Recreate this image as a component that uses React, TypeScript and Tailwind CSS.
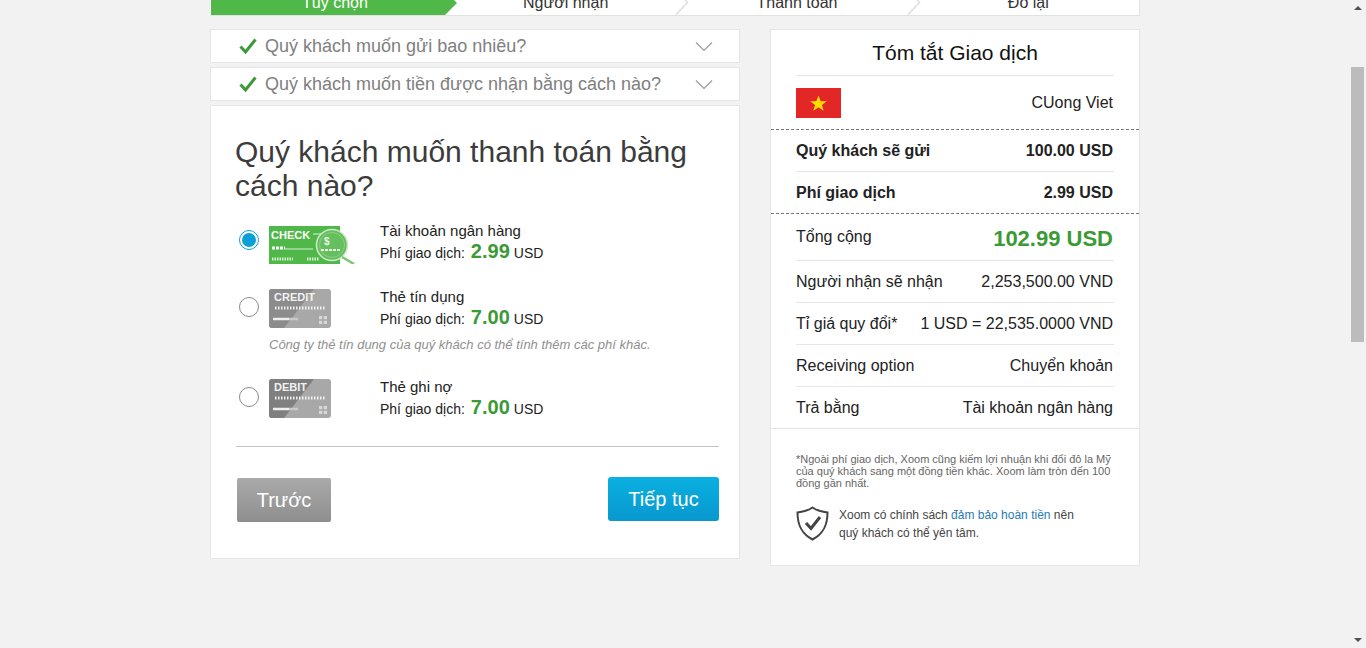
const steps = ["Người nhận", "Thanh toán", "Đô lại"];

const rows = [
  { label: "Người nhận sẽ nhận", value: "2,253,500.00 VND" },
  { label: "Tỉ giá quy đổi*", value: "1 USD = 22,535.0000 VND" },
  { label: "Receiving option", value: "Chuyển khoản" },
  { label: "Trả bằng", value: "Tài khoản ngân hàng" },
];

const Chevron = () => (
  <svg width="18" height="11" viewBox="0 0 18 11" fill="none" className="shrink-0">
    <path d="M1 1.5 9 9.5 17 1.5" stroke="#9a9a9a" strokeWidth="1.2" />
  </svg>
);

const Check = () => (
  <svg width="18" height="16" viewBox="0 0 18 16" fill="none" className="shrink-0">
    <path d="M1.5 8.5 6.5 14 16.5 1.5" stroke="#3c9a36" strokeWidth="3" />
  </svg>
);

const Accordion = ({ title }: { title: string }) => (
  <div className="flex h-[34px] items-center border border-[#e6e6e6] bg-white pl-[28px] pr-[26px]">
    <Check />
    <span className="ml-[8px] flex-1 text-[18px] text-[#808080]">{title}</span>
    <Chevron />
  </div>
);

const CheckCard = () => (
  <svg width="88" height="44" viewBox="0 0 88 44" className="shrink-0">
    <rect x="0" y="6" width="71" height="38" fill="#50b848" />
    <text x="2" y="19" fontFamily="Liberation Sans" fontWeight="700" fontSize="11" fill="#fff">CHECK</text>
    <path d="M44 14H60" stroke="#d8f0d4" strokeWidth="1" />
    <path d="M3 28H16" stroke="#ffffff" strokeWidth="3" strokeDasharray="3 1" />
    <path d="M16 29H44" stroke="#d8f0d4" strokeWidth="1" />
    <path d="M3 39H24M38 39H50" stroke="#d8f0d4" strokeWidth="3" strokeDasharray="1.5 1" />
    <circle cx="63" cy="25" r="15.5" fill="#66bf5e" stroke="#cfeaca" strokeWidth="1.5" />
    <circle cx="63" cy="25" r="12.5" fill="none" stroke="#8bd084" strokeWidth="1" />
    <path d="M73 37 85 44" stroke="#7cc776" strokeWidth="2.5" />
    <text x="55" y="25" fontFamily="Liberation Sans" fontWeight="700" fontSize="10" fill="#e6f6e4">$</text>
    <path d="M52 30H72" stroke="#e6f6e4" strokeWidth="2" strokeDasharray="3 1" />
  </svg>
);

const PlasticCard = ({ label, dark }: { label: string; dark: string }) => (
  <svg width="62" height="39" viewBox="0 0 62 39" className="shrink-0">
    <rect width="62" height="39" rx="3" fill="#a8a8a8" />
    <path d="M3 0H45L15 39H3a3 3 0 0 1-3-3V3a3 3 0 0 1 3-3z" fill={dark} />
    <text x="5" y="12" fontFamily="Liberation Sans" fontWeight="700" fontSize="11" fill="#f2f2f2">{label}</text>
    <path d="M6 19H56" stroke="#f0f0f0" strokeWidth="3" strokeDasharray="1.5 1.5" />
    <path d="M4 30H20" stroke="#eeeeee" strokeWidth="2.5" />
    <path d="M20 30H29" stroke="#c8c8c8" strokeWidth="2.5" />
    <rect x="50" y="27" width="8" height="8" fill="#d8d8d8" />
    <path d="M50 31h8M54 27v8" stroke="#a8a8a8" strokeWidth="1.5" />
  </svg>
);

const Radio = ({ on }: { on?: boolean }) => (
  <span className={`flex h-5 w-5 shrink-0 items-center justify-center rounded-full border bg-white ${on ? "-mt-[4px] border-[#0fa0d6]" : "-mt-[2px] border-[#8a8a8a]"}`}>
    {on && <span className="h-[14px] w-[14px] rounded-full bg-[#0b9fd8]" />}
  </span>
);

const PayOption = ({ icon, name, fee }: { icon: React.ReactNode; name: string; fee: string }) => (
  <div className="flex h-[44px] items-center">
    <Radio on={fee === "2.99"} />
    <div className="ml-[10px] w-[111px]">{icon}</div>
    <div className="text-[#222]">
      <div className="h-[22px] text-[15px] leading-[22px]">{name}</div>
      <div className="flex h-[22px] items-baseline pt-px text-[14px] leading-[16px]">
        Phí giao dịch:
        <span className="ml-[6px] mr-[4px] text-[20px] font-bold leading-[16px] text-[#3c9a36]">{fee}</span>
        USD
      </div>
    </div>
  </div>
);

export default function App() {
  return (
    <div className="relative h-[648px] overflow-hidden bg-[#f2f2f2] font-['Liberation_Sans',Arial,sans-serif]">
      <div className="ml-[210px] w-[930px]">
        {/* step bar, scrolled partly out of view */}
        <div className="-mt-[29px] flex h-[45px] border-b border-r border-[#e2e2e2] bg-white text-[16px] text-[#333]">
          <div className="relative ml-px flex w-[234px] items-center justify-center bg-[#50b848] pl-[14px] pt-[20px] text-white">
            Tùy chọn
            <span className="absolute -right-[12px] bottom-0 h-0 w-0 border-y-[12px] border-l-[12px] border-y-transparent border-l-[#50b848]" />
          </div>
          {steps.map((step, i) => (
            <div key={step} className="relative flex flex-1 items-center justify-center pl-[10px] pt-[20px]">
              {step}
              {i < 2 && (
                <svg width="14" height="16" viewBox="0 0 14 16" fill="none" className="absolute bottom-0 -right-[13px]">
                  <path d="M1 15.5 12.5 3.5 9.5 0" stroke="#dddddd" strokeWidth="1.5" />
                </svg>
              )}
            </div>
          ))}
        </div>

        <div className="mt-[13px] flex items-start justify-between">
          {/* left column */}
          <div className="flex w-[530px] flex-col gap-[4px]">
            <Accordion title="Quý khách muốn gửi bao nhiêu?" />
            <Accordion title="Quý khách muốn tiền được nhận bằng cách nào?" />
            <div className="h-[454px] border border-[#e6e6e6] bg-white pl-[25px] pr-[20px] pt-[29px]">
              <h1 className="-ml-px text-[30px] leading-[34px] text-[#3c3c3c]">Quý khách muốn thanh toán bằng cách nào?</h1>
              <div className="mt-[17px] pl-[3px]">
                <PayOption icon={<CheckCard />} name="Tài khoản ngân hàng" fee="2.99" />
                <div className="mt-[22px]">
                  <PayOption icon={<PlasticCard label="CREDIT" dark="#8c8c8c" />} name="Thẻ tín dụng" fee="7.00" />
                </div>
                <p className="mt-[7px] pl-[30px] text-[13px] italic leading-[16px] text-[#8f8f8f]">
                  Công ty thẻ tín dụng của quý khách có thể tính thêm các phí khác.
                </p>
                <div className="mt-[23px]">
                  <PayOption icon={<PlasticCard label="DEBIT" dark="#7f7f7f" />} name="Thẻ ghi nợ" fee="7.00" />
                </div>
              </div>
              <div className="mt-[26px] border-t border-[#c4c4c4]" />
              <div className="mt-[30px] flex items-start justify-between">
                <button className="mt-px ml-px h-[44px] w-[94px] rounded-[2px] bg-linear-to-b from-[#aaaaaa] to-[#8e8e8e] text-[20px] text-white">
                  Trước
                </button>
                <button className="h-[44px] w-[111px] rounded-[3px] bg-linear-to-b from-[#0bb0e0] to-[#0898cf] text-[20px] text-white">
                  Tiếp tục
                </button>
              </div>
            </div>
          </div>

          {/* summary */}
          <div className="h-[537px] w-[370px] border border-[#e6e6e6] bg-white text-[#222]">
            <div className="mx-[25px]">
              <div className="flex h-[46px] items-center justify-center border-b border-[#e6e6e6] text-[21px] text-[#111]">
                Tóm tắt Giao dịch
              </div>
              <div className="flex h-[53px] items-center justify-between pr-px">
                <svg width="45" height="30" viewBox="0 0 45 30">
                  <rect width="45" height="30" fill="#e32726" />
                  <path d="M22.5 7.5 24.7 13.2H30.8L25.9 16.9 27.7 22.7 22.5 19.2 17.3 22.7 19.1 16.9 14.2 13.2H20.3Z" fill="#ffde00" />
                </svg>
                <span className="text-[16px]">CUong Viet</span>
              </div>
            </div>
            <div className="border-y border-dashed border-[#777]">
              <div className="mx-[25px] flex h-[42px] items-center justify-between border-b border-[#e6e6e6] pr-px text-[16px] font-bold">
                <span>Quý khách sẽ gửi</span>
                <span>100.00 USD</span>
              </div>
              <div className="mx-[25px] flex h-[41px] items-center justify-between pr-px text-[16px] font-bold">
                <span>Phí giao dịch</span>
                <span>2.99 USD</span>
              </div>
            </div>
            <div className="mx-[25px]">
              <div className="flex h-[47px] items-center justify-between border-b border-[#e6e6e6] pr-px">
                <span className="mb-px text-[16px]">Tổng cộng</span>
                <span className="mt-[2px] text-[22px] font-bold text-[#3c9a36]">102.99 USD</span>
              </div>
              {rows.map((row, i) => (
                <div key={row.label} className={`flex items-center justify-between pr-px text-[16px] ${i < 3 ? "h-[42px] border-b border-[#e6e6e6]" : "h-[41px]"}`}>
                  <span>{row.label}</span>
                  <span>{row.value}</span>
                </div>
              ))}
            </div>
            <div className="border-t border-[#e6e6e6] px-[25px] pt-[24px]">
              <p className="text-[11px] leading-[12px] text-[#666]">
                *Ngoài phí giao dịch, Xoom cũng kiếm lợi nhuận khi đổi đô la Mỹ của quý khách sang một đồng tiền khác. Xoom làm tròn đến 100 đồng gần nhất.
              </p>
              <div className="mt-[17px] flex items-start">
                <svg width="33" height="35" viewBox="0 0 33 35" fill="none" className="shrink-0">
                  <path d="M16.5 1.5C21 4.5 26 6 31.5 6.5 31.5 20 27 28 16.5 33.5 6 28 1.5 20 1.5 6.5 7 6 12 4.5 16.5 1.5Z" stroke="#444" strokeWidth="2" />
                  <path d="M10 17 15 22.5 24 11" stroke="#444" strokeWidth="3" />
                </svg>
                <p className="ml-[10px] text-[12px] leading-[18px] text-[#444]">
                  Xoom có chính sách <span className="text-[#2a7ab5]">đảm bảo hoàn tiền</span> nên
                  <br />
                  quý khách có thể yên tâm.
                </p>
              </div>
            </div>
          </div>
        </div>
      </div>

      {/* browser scrollbar */}
      <div className="absolute inset-y-0 right-0 flex w-[17px] flex-col items-center justify-between bg-[#f2f2f2] py-[6px]">
        <span className="h-0 w-0 border-x-[4px] border-b-[4px] border-x-transparent border-b-[#505050]" />
        <span className="h-0 w-0 border-x-[4px] border-t-[4px] border-x-transparent border-t-[#505050]" />
        <span className="absolute left-[2px] top-[67px] h-[275px] w-[13px] bg-[#bcbcbc]" />
      </div>
    </div>
  );
}
